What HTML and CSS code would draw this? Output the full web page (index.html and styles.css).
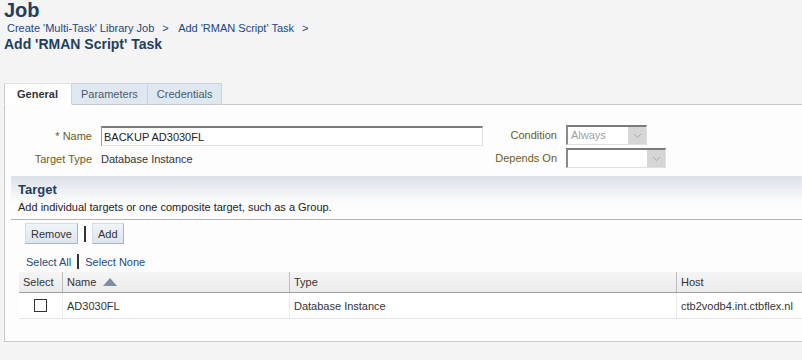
FILE: index.html
```html
<!DOCTYPE html>
<html lang="en">
<head>
  <meta charset="UTF-8" />
  <title>Add 'RMAN Script' Task</title>
  <link rel="stylesheet" href="styles.css">
</head>
<body>
  <div class="header">
    <h1>Job</h1>
    <div class="breadcrumb">
      <a href="#">Create 'Multi-Task' Library Job</a><span class="sep">&gt;</span>
      <a href="#">Add 'RMAN Script' Task</a><span class="sep">&gt;</span>
    </div>
    <h2>Add 'RMAN Script' Task</h2>
  </div>

  <div class="tabs">
    <div class="tab active">General</div>
    <div class="tab">Parameters</div>
    <div class="tab">Credentials</div>
    <div class="tab-rest"></div>
  </div>

  <div class="panel">
    <!-- task fields -->
    <div class="form">
      <div class="form-left">
        <label class="lbl" for="name"><span class="req">*</span> Name</label>
        <input class="text" id="name" type="text" value="BACKUP AD3030FL">
        <span class="lbl">Target Type</span>
        <span class="val">Database Instance</span>
      </div>
      <div class="form-right">
        <span class="lbl">Condition</span>
        <div class="select small"><span class="sel-text">Always</span><span class="sel-btn"><svg width="9" height="6" viewBox="0 0 9 6"><path d="M1 1l3.5 3.5L8 1" fill="none" stroke="#a8a8a8" stroke-width="1"/></svg></span></div>
        <span class="lbl">Depends On</span>
        <div class="select wide"><span class="sel-text"></span><span class="sel-btn"><svg width="9" height="6" viewBox="0 0 9 6"><path d="M1 1l3.5 3.5L8 1" fill="none" stroke="#a8a8a8" stroke-width="1"/></svg></span></div>
      </div>
    </div>

    <!-- target section -->
    <div class="section">
      <div class="section-head">
        <h3>Target</h3>
        <p>Add individual targets or one composite target, such as a Group.</p>
      </div>
      <div class="toolbar">
        <button>Remove</button>
        <span class="bar"></span>
        <button>Add</button>
      </div>
      <div class="links">
        <a href="#">Select All</a><span class="bar small"></span><a href="#">Select None</a>
      </div>
      <table class="grid">
        <thead>
          <tr>
            <th class="c-sel">Select</th>
            <th class="c-name">Name <svg class="sort" width="14" height="8" viewBox="0 0 14 8"><path d="M0 8L7 0l7 8z" fill="#7d8ea3"/></svg></th>
            <th class="c-type">Type</th>
            <th class="c-host">Host</th>
          </tr>
        </thead>
        <tbody>
          <tr>
            <td class="c-sel"><span class="check"></span></td>
            <td>AD3030FL</td>
            <td>Database Instance</td>
            <td>ctb2vodb4.int.ctbflex.nl</td>
          </tr>
        </tbody>
      </table>
    </div>
  </div>
</body>
</html>
```

FILE: styles.css
```css
body {
  margin: 0;
  background: #f4f4f4;
  font-family: "Liberation Sans", Arial, sans-serif;
  font-size: 11px;
  color: #333;
  overflow: hidden;
}
a {
  text-decoration: none;
}
.header {
  padding: 0 4px;
}
h1 {
  margin: 0;
  font-size: 20px;
  line-height: 21px;
  font-weight: bold;
  color: #22405e;
}
.breadcrumb {
  padding-left: 3px;
  line-height: 14px;
  font-size: 11px;
}
.breadcrumb a {
  color: #1d4680;
}
.breadcrumb .sep {
  color: #1d4680;
  margin: 0 7px 0 8px;
}
h2 {
  margin: 0;
  font-size: 14px;
  line-height: 18px;
  color: #1f3f5f;
}
.tabs {
  display: flex;
  margin-top: 30px;
  padding-left: 4px;
}
.tab {
  height: 20px;
  line-height: 20px;
  padding: 0 9px;
  background: #dfe8f0;
  border: 1px solid #c7d3de;
  border-bottom: 1px solid #c9c9c9;
  border-left: none;
  color: #4a5a6a;
}
.tab.active {
  background: #fff;
  border-left: 1px solid #c9c9c9;
  border-top: 1px solid #e3e3e3;
  border-bottom-color: #fff;
  font-weight: bold;
  color: #333;
  padding: 0 13px 0 12px;
}
.tab-rest {
  flex: 1;
  border-bottom: 1px solid #c9c9c9;
}
.panel {
  margin-left: 4px;
  width: 900px;
  height: 236px;
  background: #fdfdfd;
  border-left: 1px solid #c9c9c9;
  border-bottom: 1px solid #c9c9c9;
}
.form {
  display: flex;
  padding-top: 20px;
}
.form-left {
  display: grid;
  grid-template-columns: 87px 382px;
  column-gap: 9px;
  row-gap: 3px;
  align-items: center;
}
.form-right {
  display: grid;
  grid-template-columns: 70px auto;
  column-gap: 9px;
  row-gap: 3px;
  align-items: center;
  margin-left: 4px;
}
.lbl {
  text-align: right;
  color: #6c5c22;
  white-space: nowrap;
}
.req {
  color: #6c5c22;
}
.val {
  line-height: 16px;
}
.text {
  height: 20px;
  box-sizing: border-box;
  border: 1px solid #e0e0e0;
  border-top: 2px solid #7b7b7b;
  border-left: 1px solid #9a9a9a;
  padding: 0 2px;
  font: inherit;
  color: #222;
  background: #fff;
}
.select {
  display: flex;
  height: 20px;
  box-sizing: border-box;
  border: 1px solid #e0e0e0;
  border-top: 2px solid #7b7b7b;
  border-left: 2px solid #8a8a8a;
  background: #fff;
}
.select.small {
  width: 81px;
}
.select.wide {
  width: 100px;
}
.sel-text {
  flex: 1;
  padding-left: 3px;
  line-height: 17px;
  color: #a0a0a0;
}
.sel-btn {
  width: 18px;
  background: #d6d6d6;
  display: flex;
  align-items: center;
  justify-content: center;
}
.section {
  margin: 8px 0 0 6px;
}
.section-head {
  background: linear-gradient(#dbe1ea, #f7f8fa 22px, #fdfdfd 28px);
  padding: 5px 0 4px 7px;
  border-bottom: 1px solid #b4b4b4;
}
.section-head h3 {
  margin: 0;
  font-size: 13px;
  line-height: 17px;
  color: #1e3e5c;
}
.section-head p {
  margin: 1px 0 0;
  line-height: 16px;
  color: #222;
}
.toolbar {
  display: flex;
  align-items: center;
  padding: 3px 0 0 14px;
}
button {
  height: 21px;
  padding: 0 5px;
  font: inherit;
  color: #333;
  background: linear-gradient(#f0f4f8, #dce5ee);
  border: 1px solid #d4dce4;
  border-right-color: #a9b4c0;
  border-bottom-color: #a9b4c0;
}
.bar {
  width: 2px;
  height: 16px;
  background: #333;
  margin: 0 6px;
}
.bar.small {
  height: 15px;
  margin: 0 6px;
}
.links {
  display: flex;
  align-items: center;
  padding: 10px 0 0 15px;
}
.links a {
  color: #24497a;
}
.grid {
  margin: 3px 0 0 8px;
  border-collapse: collapse;
  width: 860px;
}
.grid th {
  height: 20px;
  padding: 0 4px;
  text-align: left;
  font-weight: normal;
  color: #333;
  background: linear-gradient(#f5f5f5, #ebebeb);
  border-left: 1px solid #bdbdbd;
  border-bottom: 1px solid #a0a0a0;
}
.grid th.c-sel {
  border-left: none;
  width: 35px;
}
.grid th.c-name {
  width: 218px;
}
.grid th.c-type {
  width: 378px;
}
.sort {
  margin-left: 4px;
  vertical-align: 0;
}
.grid td {
  height: 25px;
  padding: 0 4px;
  background: #fff;
  border-left: 1px solid #ececec;
  border-bottom: 1px solid #e4e4e4;
  color: #333;
}
.grid td.c-sel {
  border-left: none;
  text-align: center;
}
.check {
  display: inline-block;
  width: 11px;
  height: 11px;
  border: 1px solid #333;
  background: #fff;
  vertical-align: middle;
}
```
